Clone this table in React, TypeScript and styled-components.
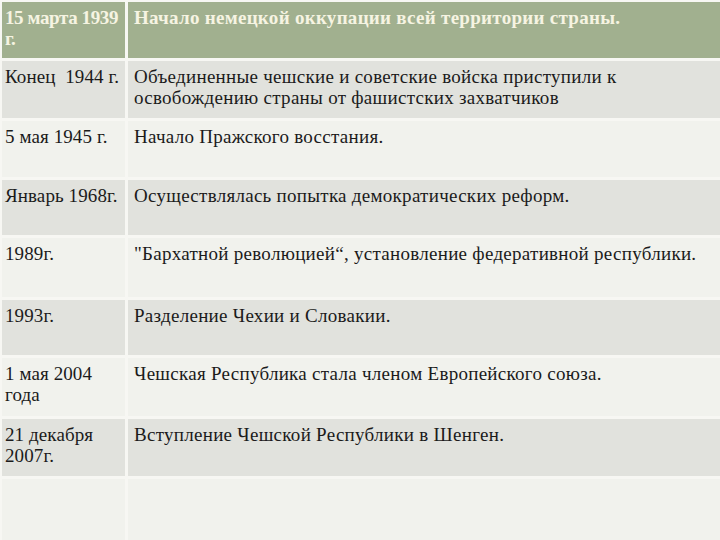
import React from "react";
import styled, { createGlobalStyle } from "styled-components";

const Global = createGlobalStyle`
  html, body { margin: 0; padding: 0; overflow: hidden; background: #f6f6f2; }
  #root { width: 720px; height: 540px; }
`;

const Table = styled.div`
  width: 720px;
  height: 540px;
  box-sizing: border-box;
  padding: 2px 0 0 2px;
  display: flex;
  flex-direction: column;
  gap: 3px;
  background: #f7f7f3;
  font-family: "Liberation Serif", "DejaVu Serif", serif;
  font-size: 19px;
  line-height: 21px;
  letter-spacing: 0.28px;
  color: #1b1b1b;
  overflow: hidden;
`;

const Row = styled.div<{ $h?: number; $tone: "head" | "grey" | "light" }>`
  display: grid;
  grid-template-columns: 123px 1fr;
  column-gap: 3px;
  flex: ${(p) => (p.$h ? `0 0 ${p.$h}px` : "1 1 auto")};
  & > div {
    background: ${(p) =>
      p.$tone === "head" ? "#a1b08f" : p.$tone === "grey" ? "#e1e2dd" : "#f1f2ed"};
    color: ${(p) => (p.$tone === "head" ? "#f6f4e2" : "#1b1b1b")};
    font-weight: ${(p) => (p.$tone === "head" ? 700 : 400)};
  }
`;

const DateCell = styled.div<{ $tight?: boolean }>`
  padding: 5px 0 0 3px;
  box-sizing: border-box;
  white-space: nowrap;
  overflow: hidden;
  letter-spacing: ${(p) => (p.$tight ? "-0.4px" : "0.1px")};
`;

const EventCell = styled.div`
  padding: 5px 4px 0 6px;
  box-sizing: border-box;
`;

type R = { d: React.ReactNode; e: React.ReactNode; h?: number };

const rows: R[] = [
  { d: "Конец\u00a0 1944 г.", e: <>Объединенные чешские и советские войска приступили к<br />освобождению страны от фашистских захватчиков</>, h: 57 },
  { d: "5 мая 1945 г.", e: "Начало Пражского восстания.", h: 56 },
  { d: "Январь 1968г.", e: "Осуществлялась попытка демократических реформ.", h: 55 },
  { d: "1989г.", e: "\"Бархатной революцией“, установление федеративной республики.", h: 59 },
  { d: "1993г.", e: "Разделение Чехии и Словакии.", h: 55 },
  { d: <>1 мая 2004<br />года</>, e: "Чешская Республика стала членом Европейского союза.", h: 58 },
  { d: <>21 декабря<br />2007г.</>, e: "Вступление Чешской Республики в Шенген.", h: 57 },
  { d: "", e: "" },
];

export default function App() {
  return (
    <>
      <Global />
      <Table>
        <Row $tone="head" $h={56}>
          <DateCell $tight>15 марта 1939<br />г.</DateCell>
          <EventCell>Начало немецкой оккупации всей территории страны.</EventCell>
        </Row>
        {rows.map((r, i) => (
          <Row key={i} $tone={i % 2 === 0 ? "grey" : "light"} $h={r.h}>
            <DateCell>{r.d}</DateCell>
            <EventCell>{r.e}</EventCell>
          </Row>
        ))}
      </Table>
    </>
  );
}
